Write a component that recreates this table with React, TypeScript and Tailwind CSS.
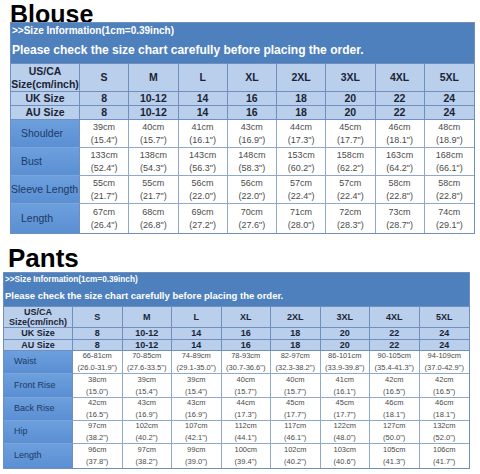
import { Fragment } from "react";

const sizes = ["S", "M", "L", "XL", "2XL", "3XL", "4XL", "5XL"];
const uk = ["8", "10-12", "14", "16", "18", "20", "22", "24"];

type Row = { label: string; pad?: string; h: string; cells: [string, string][] };

const blouseRows: Row[] = [
    {
        label: "Shoulder",
        h: "h-[28px]",
        cells: [["39cm", "(15.4\")"], ["40cm", "(15.7\")"], ["41cm", "(16.1\")"], ["43cm", "(16.9\")"], ["44cm", "(17.3\")"], ["45cm", "(17.7\")"], ["46cm", "(18.1\")"], ["48cm", "(18.9\")"]],
    },
    {
        label: "Bust",
        h: "h-[28px]",
        cells: [["133cm", "(52.4\")"], ["138cm", "(54.3\")"], ["143cm", "(56.3\")"], ["148cm", "(58.3\")"], ["153cm", "(60.2\")"], ["158cm", "(62.2\")"], ["163cm", "(64.2\")"], ["168cm", "(66.1\")"]],
    },
    {
        label: "Sleeve Length",
        pad: "pl-0",
        h: "h-[28px]",
        cells: [["55cm", "(21.7\")"], ["55cm", "(21.7\")"], ["56cm", "(22.0\")"], ["56cm", "(22.0\")"], ["57cm", "(22.4\")"], ["57cm", "(22.4\")"], ["58cm", "(22.8\")"], ["58cm", "(22.8\")"]],
    },
    {
        label: "Length",
        h: "h-[29px]",
        cells: [["67cm", "(26.4\")"], ["68cm", "(26.8\")"], ["69cm", "(27.2\")"], ["70cm", "(27.6\")"], ["71cm", "(28.0\")"], ["72cm", "(28.3\")"], ["73cm", "(28.7\")"], ["74cm", "(29.1\")"]],
    },
];

const pantsRows: Row[] = [
    {
        label: "Waist",
        h: "h-[23px]",
        cells: [["66-81cm", "(26.0-31.9\")"], ["70-85cm", "(27.6-33.5\")"], ["74-89cm", "(29.1-35.0\")"], ["78-93cm", "(30.7-36.6\")"], ["82-97cm", "(32.3-38.2\")"], ["86-101cm", "(33.9-39.8\")"], ["90-105cm", "(35.4-41.3\")"], ["94-109cm", "(37.0-42.9\")"]],
    },
    {
        label: "Front Rise",
        h: "h-[24px]",
        cells: [["38cm", "(15.0\")"], ["39cm", "(15.4\")"], ["39cm", "(15.4\")"], ["40cm", "(15.7\")"], ["40cm", "(15.7\")"], ["41cm", "(16.1\")"], ["42cm", "(16.5\")"], ["42cm", "(16.5\")"]],
    },
    {
        label: "Back Rise",
        h: "h-[23px]",
        cells: [["42cm", "(16.5\")"], ["43cm", "(16.9\")"], ["43cm", "(16.9\")"], ["44cm", "(17.3\")"], ["45cm", "(17.7\")"], ["45cm", "(17.7\")"], ["46cm", "(18.1\")"], ["46cm", "(18.1\")"]],
    },
    {
        label: "Hip",
        h: "h-[23px]",
        cells: [["97cm", "(38.2\")"], ["102cm", "(40.2\")"], ["107cm", "(42.1\")"], ["112cm", "(44.1\")"], ["117cm", "(46.1\")"], ["122cm", "(48.0\")"], ["127cm", "(50.0\")"], ["132cm", "(52.0\")"]],
    },
    {
        label: "Length",
        h: "h-[24px]",
        cells: [["96cm", "(37.8\")"], ["97cm", "(38.2\")"], ["99cm", "(39.0\")"], ["100cm", "(39.4\")"], ["102cm", "(40.2\")"], ["103cm", "(40.6\")"], ["105cm", "(41.3\")"], ["106cm", "(41.7\")"]],
    },
];

type SheetStyle = {
    wrap: string;
    info: string;
    please: string;
    cols: string;
    headH: string;
    ukH: string;
    auH: string;
    head: string;
    label: string;
    labelPad: string;
    data: string;
};

const blouseStyle: SheetStyle = {
    wrap: "ml-[10px] w-[465px]",
    info: "h-[15px] pt-[1px] text-[10px] leading-[14px] pl-[1px]",
    please: "h-[25px] text-[12px] leading-[24px] pl-[1px]",
    cols: "grid-cols-[69px_repeat(8,1fr)]",
    headH: "h-[29px]",
    ukH: "h-[14px]",
    auH: "h-[14px]",
    head: "text-[10.5px] leading-[13px]",
    label: "text-[10.5px]",
    labelPad: "pl-[10px]",
    data: "text-[9px] leading-[13px]",
};

const pantsStyle: SheetStyle = {
    wrap: "ml-[3px] w-[467px]",
    info: "h-[13px] text-[8.2px] leading-[13px] pl-[1px]",
    please: "h-[20px] text-[9.5px] leading-[20px] pl-[1px]",
    cols: "grid-cols-[69px_repeat(8,1fr)]",
    headH: "h-[22px]",
    ukH: "h-[12px]",
    auH: "h-[11px]",
    head: "text-[9px] leading-[10.5px]",
    label: "text-[9px]",
    labelPad: "pl-[10px]",
    data: "text-[7.5px] leading-[12px]",
};

const Sheet = ({ s, rows }: { s: SheetStyle; rows: Row[] }) => (
    <div className={`${s.wrap} relative border border-[#6f8fbf]`}>
        <div className="bg-[#4f80be] text-white font-bold">
            <div className={`${s.info} whitespace-nowrap`}>
                &gt;&gt;Size Information(1cm=0.39inch)
            </div>
            <div className={`${s.please} whitespace-nowrap`}>
                Please check the size chart carefully before placing the order.
            </div>
        </div>
        <div className={`grid ${s.cols}`}>
            <div
                className={`${s.headH} ${s.head} flex flex-col items-center justify-center bg-[#b9cfeb] text-[#1b2436] font-bold border-t border-r border-b border-[#6f8fbf]`}
            >
                <span>US/CA</span>
                <span>Size(cm/inch)</span>
            </div>
            {sizes.map((sz, i) => (
                <div
                    key={sz}
                    className={`${s.headH} ${s.head} flex items-center justify-center bg-[#b9cfeb] text-[#1b2436] font-bold border-t border-b border-[#6f8fbf] ${
                        i < 7 ? "border-r" : ""
                    }`}
                >
                    {sz}
                </div>
            ))}
            {["UK Size", "AU Size"].map((lbl, r) => (
                <Fragment key={lbl}>
                    <div
                        className={`${r === 0 ? s.ukH : s.auH} ${s.head} flex items-center justify-center bg-[#b9cfeb] text-[#1b2436] font-bold border-r border-b border-[#6f8fbf]`}
                    >
                        {lbl}
                    </div>
                    {uk.map((v, i) => (
                        <div
                            key={i}
                            className={`${r === 0 ? s.ukH : s.auH} ${s.head} flex items-center justify-center bg-[#b9cfeb] text-[#1b2436] font-bold border-b border-[#6f8fbf] ${
                                i < 7 ? "border-r" : ""
                            }`}
                        >
                            {v}
                        </div>
                    ))}
                </Fragment>
            ))}
            {rows.map((row, r) => (
                <Fragment key={row.label}>
                    <div
                        className={`${row.h} ${s.label} ${row.pad ?? s.labelPad} flex items-center whitespace-nowrap bg-gradient-to-b from-[#6c9fdc] to-[#5a8fd4] text-[#1d3a66] border-r border-[#6f8fbf] ${
                            r < rows.length - 1 ? "border-b border-b-[#7fa5d8]" : ""
                        }`}
                    >
                        {row.label}
                    </div>
                    {row.cells.map(([a, b], i) => (
                        <div
                            key={i}
                            className={`${row.h} ${s.data} flex flex-col items-center justify-center bg-white text-[#4a4a4a] border-[#8fa8cc] ${
                                i < 7 ? "border-r" : ""
                            } ${r < rows.length - 1 ? "border-b" : ""}`}
                        >
                            <span>{a}</span>
                            <span>{b}</span>
                        </div>
                    ))}
                </Fragment>
            ))}
        </div>
    </div>
);

export default function App() {
    return (
        <div className="w-[480px] h-[474px] overflow-hidden bg-white font-['Liberation_Sans',Arial,sans-serif]">
            <div className="h-[22px] pl-[10px] text-[25px] leading-[29px] font-bold text-black">
                Blouse
            </div>
            <Sheet s={blouseStyle} rows={blouseRows} />
            <div className="h-[38px] pt-[11px] pl-[8px] text-[26px] leading-[26px] font-bold text-black">
                Pants
            </div>
            <Sheet s={pantsStyle} rows={pantsRows} />
        </div>
    );
}
